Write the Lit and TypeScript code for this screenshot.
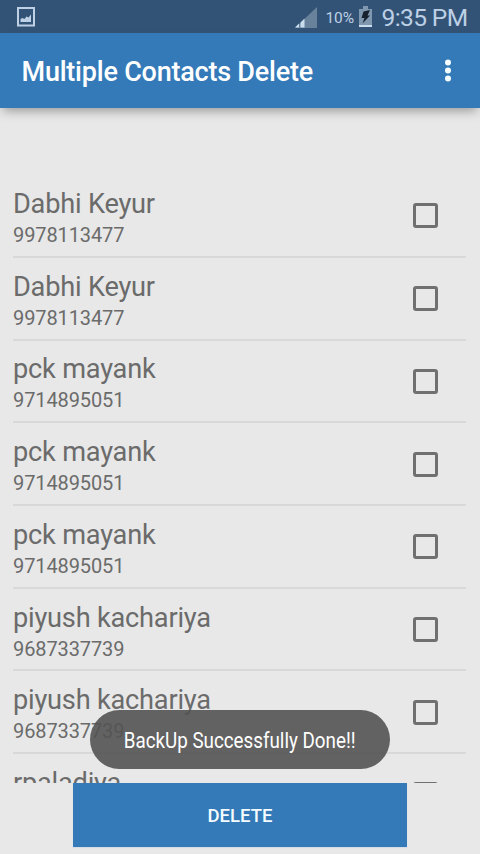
import { LitElement, html, css, svg } from "lit";
import { customElement } from "lit/decorators.js";

const contacts = [
  ["Dabhi Keyur", "9978113477"],
  ["Dabhi Keyur", "9978113477"],
  ["pck mayank", "9714895051"],
  ["pck mayank", "9714895051"],
  ["pck mayank", "9714895051"],
  ["piyush kachariya", "9687337739"],
  ["piyush kachariya", "9687337739"],
  ["rpaladiya", ""],
];

@customElement("app-root")
export class AppRoot extends LitElement {
  static styles = css`
    :host { display: block; width: 480px; height: 854px; overflow: hidden; background: #e8e8e8; font-family: Roboto, sans-serif; position: relative; }
    * { box-sizing: border-box; }
    .screen { height: 854px; display: flex; flex-direction: column; }
    .status { height: 33px; flex: none; background: #335376; display: flex; align-items: center; color: #bdd0e5; padding-top: 1px; }
    .status svg { flex: none; }
    .picture { margin-left: 16px; }
    .signal { margin-left: auto; }
    .pct { font-size: 15.5px; letter-spacing: -0.1px; margin-left: 9px; width: 32px; white-space: nowrap; padding-top: 1px; }
    .clock { font-size: 24.5px; letter-spacing: -0.6px; margin-left: 9px; width: 98.5px; white-space: nowrap; }
    .bar { height: 75px; flex: none; background: #347ab8; color: #fff; display: flex; align-items: center; padding: 1px 23px 0 21.5px; box-shadow: 0 6px 10px -3px rgba(0,0,0,.34); }
    .title { font-size: 27px; letter-spacing: -0.22px; font-weight: 500; flex: 1; white-space: nowrap; padding-top: 1px; }
    .list { height: 675px; flex: none; overflow: hidden; padding: 67.1px 14px 0 13px; clip-path: inset(20px 0 0 0); }
    .row { height: 82.72px; border-bottom: 2px solid #d8d8d8; display: flex; padding-right: 28px; }
    .info { flex: 1; padding-top: 11.9px; white-space: nowrap; color: #6b6b6b; }
    .name { font-size: 27.2px; letter-spacing: -0.22px; line-height: 34px; }
    .phone { font-size: 20px; letter-spacing: -0.1px; line-height: 28px; }
    .box { width: 25px; height: 25px; margin-top: 28.4px; border: 3px solid #707070; border-radius: 3px; }
    .row:last-child .box { margin-top: 27.6px; }
    .footer { flex: 1; display: flex; justify-content: center; padding: 0 0 7px; }
    .delete { width: 334px; border: 0; background: #347ab8; color: #f4fcff; font: 500 18.5px Roboto, sans-serif; padding-top: 3px; box-shadow: 0 1px 1px #d4dce4; }
    .toast { position: absolute; left: 90px; top: 710px; width: 300px; height: 59px; border-radius: 30px; background: rgba(83,83,83,.9); color: #fff; display: flex; align-items: center; justify-content: center; font-size: 21.5px; white-space: nowrap; padding-top: 2px; }
    .message { display: block; transform: scaleX(.874); }
  `;

  render() {
    return html`
      <div class="screen">
        <div class="status">
          <svg class="picture" width="20" height="20" viewBox="0 0 20 20"><rect x="2" y="1" width="16" height="17.5" fill="none" stroke="#bdd0e5" stroke-width="2"/><path d="M4.5 15v-3l2-1 2 1 2-2.500 2 1 2.500-3V15z" fill="#bdd0e5"/></svg>
          <svg class="signal" width="22" height="21" viewBox="0 0 22 21"><path d="M0 21L22 0v21z" fill="#68829c"/><path d="M0 20.500l4-4v4zM5.500 20.500v-5L9.500 11.500v9z" fill="#c9dded"/></svg>
          <span class="pct">10%</span>
          <svg width="15" height="22" viewBox="0 0 15 22"><path d="M5 0h5v3h4v18H1V3h4z" fill="#7f98b0"/><path d="M1 19h13v2H1z" fill="#c9dded"/><path d="M5.500 5.500L12 4 9.500 9.500H12L4.500 17.500 6.500 12H3.500z" fill="#17212d"/></svg>
          <span class="clock">9:35 PM</span>
        </div>
        <header class="bar">
          <div class="title">Multiple Contacts Delete</div>
          <svg width="18" height="24" viewBox="0 0 18 24">${[3.5, 11.5, 19.5].map((y) => svg`<circle cx="9" cy=${y} r="3" fill="#f4fcff"/>`)}</svg>
        </header>
        <main class="list">
          ${contacts.map(([name, phone]) => html`<div class="row"><div class="info"><div class="name">${name}</div><div class="phone">${phone}</div></div><div class="box"></div></div>`)}
        </main>
        <footer class="footer"><button class="delete">DELETE</button></footer>
      </div>
      <div class="toast"><span class="message">BackUp Successfully Done!!</span></div>
    `;
  }
}
